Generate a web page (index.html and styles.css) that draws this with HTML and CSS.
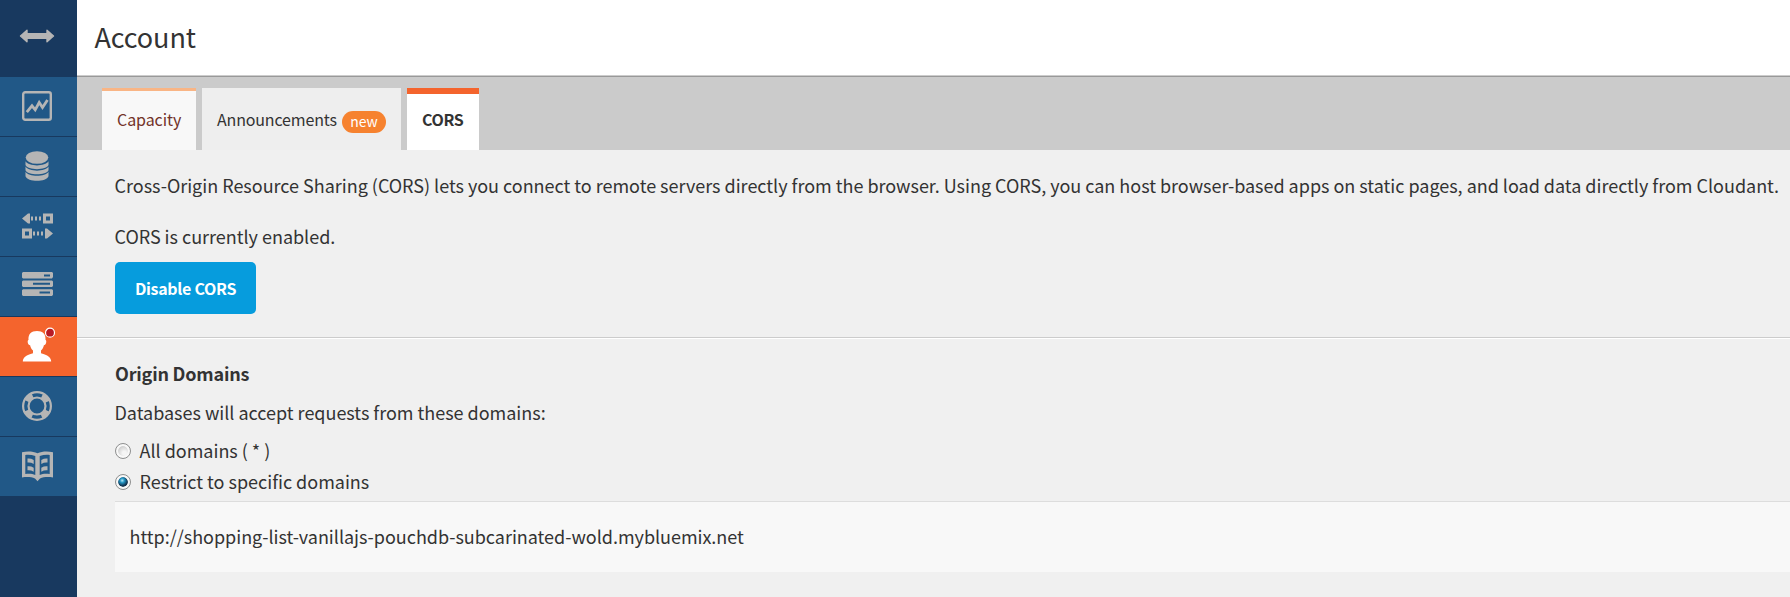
FILE: index.html
```html
<!DOCTYPE html>
<html lang="en">
<head>
<meta charset="utf-8">
<title>Account</title>
<link rel="stylesheet" href="styles.css">
</head>
<body>
<div class="app">
  <nav class="sidebar">
    <a class="nav-toggle"><svg width="36" height="14" viewBox="0 0 36 14"><path d="M1.500 7 8 1.200v3.500h20V1.200L34.500 7 28 12.800V9.300H8v3.500Z" stroke="currentColor" stroke-width="1.400" stroke-linejoin="round"/></svg></a>
    <a class="nav-item"><svg width="30" height="30" viewBox="0 0 30 30"><rect x="1.200" y="1.200" width="27.600" height="27.600" rx="2" fill="none" stroke="currentColor" stroke-width="2.400"/><path d="m4.800 21.200 5.200-6.400 3.200 4 4-7.300 3.300 5L25.500 9" fill="none" stroke="currentColor" stroke-width="2.800"/></svg></a>
    <a class="nav-item"><svg width="24" height="30" viewBox="0 0 24 30"><ellipse cx="12" cy="6.500" rx="11.300" ry="6.300"/><path d="M.5 10.300c3 5.500 20 5.500 23 0v3.700c-2 5.500-21 5.500-23 0ZM.5 15.500c3 5.500 20 5.500 23 0v3.700c-2 5.500-21 5.500-23 0ZM.5 20.700c3 5.500 20 5.500 23 0v4.500c-2 6.200-21 6.200-23 0Z"/></svg></a>
    <a class="nav-item"><svg width="31" height="26" viewBox="0 0 31 26"><path d="m0 5.500 6-5h2v10H6ZM9 3.500h2v4H9Zm4 0h2v4h-2Zm4 0h2v4h-2ZM31 20.500l-6-5h-2v10h2ZM11 18.500h2v4h-2Zm4 0h2v4h-2Zm4 0h2v4h-2Z"/><path d="M22.500 2h7v7h-7ZM1.500 17h7v7h-7Z" fill="none" stroke="currentColor" stroke-width="3"/></svg></a>
    <a class="nav-item servers"><svg width="31" height="24" viewBox="0 0 31 24"><path fill-rule="evenodd" d="M1 0h29l1 1v4l-1 1.500H1L0 5.500V1ZM22 2.500v2h6v-2ZM1 8.500h29l1 1v4.500l-1 1H1l-1-1V9.500Zm10 2.300v1.900h17v-1.900ZM1 17.200h29l1 1v4.600l-1 1.200H1l-1-1v-4.800Zm16.500 2.300v2H28v-2Z"/></svg></a>
    <a class="nav-item active"><svg width="34" height="36" viewBox="0 0 34 36"><path d="M.8 34.500c.2-4.300 3.500-6.300 10.200-8.300v-2.700c-1.500-1.200-2.500-3-2.900-5.200-2.300-.2-3.200-4.800-1.600-5.300C6 7.200 9.200 4 15 4s9 3.200 8.500 9c1.600.5.700 5.100-1.600 5.300-.4 2.200-1.400 4-2.900 5.200v2.700c6.700 2 10 4 10.200 8.300Z"/><circle cx="28" cy="5.700" r="4.500" fill="#b81a25" stroke="#fff" stroke-width="1.200"/></svg></a>
    <a class="nav-item"><svg width="30" height="30" viewBox="0 0 30 30" fill="none" stroke="currentColor"><circle cx="15" cy="15" r="13.900" stroke-width="2.200"/><circle cx="15" cy="15" r="8.500" stroke-width="2.200"/><circle cx="15" cy="15" r="11.200" stroke-width="5" stroke-dasharray="8 9.593" stroke-dashoffset="-4.797"/></svg></a>
    <a class="nav-item"><svg width="31" height="31" viewBox="0 0 31 31"><path fill-rule="evenodd" d="M0 1.200c6-1.300 11-.8 15.500 1C20 .4 25 -.1 31 1.200v25.300c-5-.8-9.500-.5-13 1l-2.500 2.800-2.500-2.800c-3.500-1.500-8-1.800-13-1ZM3.300 4v19c4-.5 7-.3 10 .9V5C10 3.900 6.500 3.500 3.300 4Zm24.400 0c-3.200-.5-6.700-.1-10 1v18.900c3-1.200 6-1.400 10-.9Z"/><path d="M5.500 7.500q3.200-.4 6.200 1.400v4q-3-1.800-6.200-1.400Zm0 7.800q3.200-.4 6.200 1.400v4q-3-1.800-6.200-1.400Zm20-7.800q-3.200-.4-6.200 1.400v4q3-1.800 6.200-1.400Zm0 7.800q-3.200-.4-6.200 1.400v4q3-1.800 6.200-1.400Z"/></svg></a>
  </nav>
  <main class="main">
    <header class="header"><h1 class="title"><span>Account</span></h1></header>
    <div class="tabs">
      <a class="tab tab-hover">Capacity</a>
      <a class="tab tab-news"><span class="tab-label">Announcements</span><span class="badge">new</span></a>
      <a class="tab tab-active">CORS</a>
    </div>
    <section class="status">
      <p class="text intro">Cross-Origin Resource Sharing (CORS) lets you connect to remote servers directly from the browser. Using CORS, you can host browser-based apps on static pages, and load data directly from Cloudant.</p>
      <p class="text state">CORS is currently enabled.</p>
      <button class="button">Disable CORS</button>
    </section>
    <section class="origins">
      <h2 class="subtitle">Origin Domains</h2>
      <p class="text hint">Databases will accept requests from these domains:</p>
      <label class="option"><span class="radio"></span><span>All domains ( * )</span></label>
      <label class="option option-restrict"><span class="radio checked"></span><span>Restrict to specific domains</span></label>
      <div class="domain">http://shopping-list-vanillajs-pouchdb-subcarinated-wold.mybluemix.net</div>
    </section>
  </main>
</div>
</body>
</html>
```
FILE: styles.css
```css
* { box-sizing: border-box; }
body {
  margin: 0;
  font-family: "Noto Sans CJK SC", "Noto Sans", sans-serif;
  font-size: 18px;
  line-height: 28px;
  letter-spacing: -0.015px;
  color: #333;
  background: #f0f0f0;
  overflow: hidden;
}
h1, h2, p { margin: 0; }
.app { display: flex; height: 597px; }
.sidebar { width: 77px; flex: none; background: #18395f; color: #b5b5b5; }
.sidebar svg { display: block; fill: currentColor; }
.sidebar svg[fill="none"] { fill: none; }
.nav-toggle { display: flex; height: 77px; padding: 0 4px 5px 0; align-items: center; justify-content: center; }
.nav-item {
  display: flex; height: 60px; align-items: center; justify-content: center;
  padding: 0 3px 2px 0; background: #215887; border-bottom: 1px solid #18395f;
}
.nav-item.servers { padding-bottom: 5px; }
.nav-item.active { background: #f4642d; color: #fff; padding: 0 0 4px; }
.nav-item:last-child { border-bottom: 0; height: 59px; padding-bottom: 1px; }
.main { flex: 1; min-width: 0; }
.header {
  height: 77px; padding: 17px 0 0 17.500px; background: #fff;
  border-bottom: 1px solid #999; box-shadow: inset 0 -1px #ccc;
}
.title { font-size: 27px; line-height: 40px; font-weight: 400; letter-spacing: -0.1px; }
.tabs { display: flex; gap: 6px; height: 73px; padding: 11px 0 0 25px; background: #cbcbcb; }
.tab { display: flex; height: 62px; padding-left: 15px; font-size: 16px; line-height: 62px; letter-spacing: -0.08px; white-space: nowrap; }
.tab-hover { width: 94px; background: #f8f8f8; box-shadow: inset 0 3px #f9b585; color: #723229; }
.tab-news { width: 199px; background: #eee; }
.tab-label { width: 125px; letter-spacing: -0.16px; }
.badge {
  width: 44px; height: 22px; margin-top: 23px; border-radius: 11px;
  background: #f6822f; color: #fff; font-size: 14px; line-height: 21px; text-align: center;
}
.tab-active { width: 72px; background: #fff; box-shadow: inset 0 6px #f4642d; font-weight: 700; letter-spacing: -0.4px; }
.status { height: 188px; padding: 21px 0 0 38px; border-bottom: 1px solid #ccc; }
.text { margin-left: -0.5px; white-space: nowrap; }
.state { margin-top: 23px; }
.button {
  display: block; width: 141px; height: 52px; margin-top: 12px; padding: 0; border: 0;
  border-radius: 5px; background: #069cdd; color: #fff; font: 700 16px/52px "Noto Sans CJK SC", sans-serif;
  letter-spacing: -0.3px;
}
.origins { padding: 20px 0 0 38px; border-top: 1px solid #fff; }
.subtitle { font-size: 18px; line-height: 28px; font-weight: 700; letter-spacing: -0.2px; }
.hint { margin-top: 11px; }
.option { display: flex; align-items: center; gap: 8.500px; height: 28px; margin-top: 10px; }
.option-restrict { margin-top: 3px; }
.radio {
  width: 16px; height: 16px; margin-top: 2px; border: 1px solid #8e8f8f; border-radius: 50%;
  background: radial-gradient(circle at 60% 65%, #f5f5f5 0 15%, #ccc 60%, #b5b8bc 70%);
  background-clip: content-box; padding: 2px; box-shadow: inset 0 0 0 2px #f8f8f8;
}
.radio.checked { background: radial-gradient(circle at 42% 35%, #b6e8f6 0, #2496c4 25%, #123653 60%, #102030 100%) content-box; }
.domain { height: 71px; margin-top: 6px; padding-left: 14.500px; border-top: 1px solid #ddd; background: #f8f8f8; line-height: 69px; letter-spacing: -0.02px; white-space: nowrap; }
```
